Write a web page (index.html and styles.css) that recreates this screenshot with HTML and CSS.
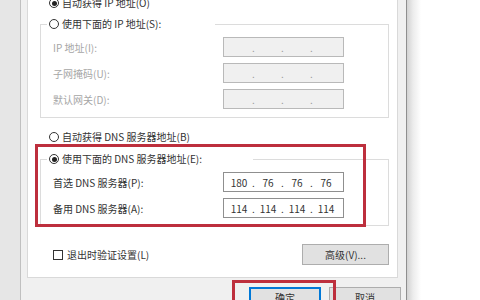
FILE: index.html
```html
<!DOCTYPE html>
<html lang="zh-CN">
<head>
<meta charset="utf-8">
<title>Internet 协议版本 4 (TCP/IPv4) 属性</title>
<link rel="stylesheet" href="styles.css">
</head>
<body>
<div class="screen">
  <div class="backwin"></div>
  <div class="dialog">
    <div class="panel">
      <div class="opt opt-ip"><span class="radio on"></span>自动获得 IP 地址(O)</div>
      <div class="group g-ip">
        <div class="legend legend-ip"><span class="radio"></span>使用下面的 IP 地址(S):</div>
        <div class="rows">
          <div class="row off"><span class="lbl">IP 地址(I):</span><span class="ipbox off"><span class="f"></span><span class="d">.</span><span class="f"></span><span class="d">.</span><span class="f"></span><span class="d">.</span><span class="f"></span></span></div>
          <div class="row off"><span class="lbl">子网掩码(U):</span><span class="ipbox off"><span class="f"></span><span class="d">.</span><span class="f"></span><span class="d">.</span><span class="f"></span><span class="d">.</span><span class="f"></span></span></div>
          <div class="row off"><span class="lbl">默认网关(D):</span><span class="ipbox off"><span class="f"></span><span class="d">.</span><span class="f"></span><span class="d">.</span><span class="f"></span><span class="d">.</span><span class="f"></span></span></div>
        </div>
      </div>
      <div class="opt opt-dns"><span class="radio"></span>自动获得 DNS 服务器地址(B)</div>
      <div class="group g-dns">
        <div class="legend legend-dns"><span class="radio on"></span>使用下面的 DNS 服务器地址(E):</div>
        <div class="rows">
          <div class="row"><span class="lbl">首选 DNS 服务器(P):</span><span class="ipbox"><span class="f">180</span><span class="d">.</span><span class="f">76</span><span class="d">.</span><span class="f">76</span><span class="d">.</span><span class="f">76</span></span></div>
          <div class="row"><span class="lbl">备用 DNS 服务器(A):</span><span class="ipbox"><span class="f">114</span><span class="d">.</span><span class="f">114</span><span class="d">.</span><span class="f">114</span><span class="d">.</span><span class="f">114</span></span></div>
        </div>
        <div class="mark mark-dns"></div>
      </div>
      <div class="foot">
        <label class="check"><span class="box"></span>退出时验证设置(L)</label>
        <button class="btn btn-adv">高级(V)...</button>
      </div>
    </div>
    <div class="buttons">
      <button class="btn btn-ok">确定</button>
      <button class="btn">取消</button>
    </div>
  </div>
  <div class="shadow"></div>
  <div class="mark mark-ok"></div>
</div>
</body>
</html>
```
FILE: styles.css
```css
* { box-sizing: border-box; }
html, body { margin: 0; padding: 0; }
body {
  width: 480px;
  height: 300px;
  overflow: hidden;
  background: #ffffff;
  font-family: "Noto Sans CJK SC", "Noto Sans", sans-serif;
  font-size: 10px;
  color: #333333;
}
.screen {
  position: relative;
  display: flex;
  width: 480px;
  height: 300px;
  overflow: hidden;
}
.backwin {
  width: 21px;
  flex: none;
  background: #e6e6e6;
  border-right: 1px solid #c0c0c0;
}
.dialog {
  flex: none;
  width: 386px;
  background: #f0f0f0;
  border-right: 1px solid #8e8e8e;
  padding: 0 8px 0 6px;
}
.shadow {
  flex: 1;
  background: linear-gradient(to right, #d2d2d2 0, #ececec 6px, #ffffff 14px);
}
.panel {
  margin-top: -20px;
  background: #ffffff;
  border: 1px solid #d9d9d9;
  padding: 14px 8px 12px 12px;
}
.opt, .legend {
  display: flex;
  align-items: center;
  height: 16px;
  line-height: 16px;
  white-space: nowrap;
}
.opt { padding-left: 9px; }
.opt-dns { margin-top: 11px; }
.radio {
  width: 10px;
  height: 10px;
  border: 1px solid #333333;
  border-radius: 50%;
  background: #ffffff;
  margin-right: 3px;
  flex: none;
  display: flex;
  align-items: center;
  justify-content: center;
}
.radio.on::after {
  content: "";
  width: 5px;
  height: 5px;
  border-radius: 50%;
  background: #222222;
}
.group {
  position: relative;
  border: 1px solid #dcdcdc;
}
.g-ip { margin-top: 13px; padding-bottom: 8px; }
.g-dns { margin-top: 14px; padding-bottom: 7px; }
.legend {
  margin-top: -9px;
  margin-left: 6px;
  padding-left: 2px;
  background: #ffffff;
}
.legend-ip { width: 168px; }
.legend-dns { width: 206px; }
.rows {
  margin-top: 5px;
  padding-left: 12px;
  display: flex;
  flex-direction: column;
  gap: 6px;
}
.row {
  display: flex;
  align-items: center;
  height: 20px;
}
.lbl {
  width: 170px;
  flex: none;
  white-space: nowrap;
}
.row.off .lbl { color: #a6a6a6; }
.ipbox {
  display: flex;
  align-items: center;
  width: 121px;
  height: 20px;
  border: 1px solid #8f8f8f;
  background: #ffffff;
  padding-left: 3px;
  font-size: 10px;
  color: #333333;
}
.ipbox.off {
  background: #f0f0f0;
  border-color: #b9b9b9;
  color: #9a9a9a;
}
.ipbox .f { width: 24px; text-align: center; }
.ipbox .d { width: 5px; text-align: center; }
.foot {
  margin-top: 18px;
  display: flex;
  align-items: center;
  justify-content: space-between;
  padding-left: 13px;
}
.check {
  display: flex;
  align-items: center;
  white-space: nowrap;
}
.check .box {
  width: 10px;
  height: 10px;
  border: 1px solid #333333;
  background: #ffffff;
  margin-right: 4px;
}
.btn {
  font-family: inherit;
  font-size: 10px;
  color: #333333;
  background: #e1e1e1;
  border: 1px solid #adadad;
  height: 21px;
  padding: 0;
  margin: 0;
  line-height: 19px;
}
.btn-adv { width: 87px; }
.buttons {
  margin-top: 9px;
  margin-right: -3px;
  display: flex;
  justify-content: flex-end;
  gap: 8px;
}
.buttons .btn { width: 72px; }
.btn-ok {
  border-color: #0078d7;
  box-shadow: inset 0 0 0 1px #0078d7;
}
.mark {
  position: absolute;
  border: 3px solid #bd2f3d;
  pointer-events: none;
}
.mark-dns {
  left: -6px;
  top: -16px;
  width: 331px;
  height: 83px;
}
.mark-ok {
  left: 232px;
  top: 280px;
  width: 104px;
  height: 40px;
}
```
